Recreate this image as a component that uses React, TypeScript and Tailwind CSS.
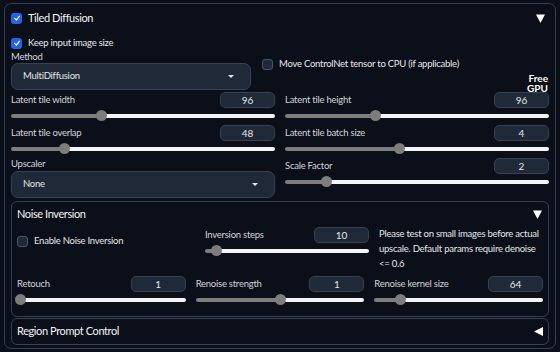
import React from "react";

const FONT = { fontFamily: "Lato, 'Noto Sans', sans-serif" };

function Check({ on }: { on?: boolean }) {
  return on ? (
    <span className="flex h-[11px] w-[11px] shrink-0 items-center justify-center rounded-[3px] bg-[#2563eb]">
      <svg viewBox="0 0 12 12" className="h-[8px] w-[8px]">
        <path d="M2.5 6.5 L5 9 L9.5 3.5" fill="none" stroke="white" strokeWidth="1.8" strokeLinecap="round" strokeLinejoin="round" />
      </svg>
    </span>
  ) : (
    <span className="h-[11px] w-[11px] shrink-0 rounded-[3px] border border-[#4b5563] bg-[#1f2937]" />
  );
}

function Caret({ dir }: { dir: "down" | "left" }) {
  return dir === "down" ? (
    <svg viewBox="0 0 9 9" className="h-[9px] w-[9px]">
      <path d="M0 0.5 H9 L4.5 9 Z" fill="white" />
    </svg>
  ) : (
    <svg viewBox="0 0 9 9" className="h-[9px] w-[9px]">
      <path d="M9 0 V9 L0 4.5 Z" fill="white" />
    </svg>
  );
}

function NumBox({ v }: { v: string }) {
  return (
    <div className="flex h-[16px] w-[55px] items-center justify-center rounded-[5px] border border-[#374151] bg-[#1f2937] text-[10px] text-[#e5e7eb]">
      {v}
    </div>
  );
}

function Slider({ pct }: { pct: number }) {
  return (
    <div className="relative flex h-[11px] items-center">
      <div className="flex h-[4px] w-full overflow-hidden rounded-full">
        <div className="h-full bg-[#7d7d7d]" style={{ width: `${pct}%` }} />
        <div className="h-full flex-1 bg-[#f3f4f6]" />
      </div>
      <div
        className="absolute top-0 h-[11px] w-[11px] rounded-full bg-[#7d7d7d]"
        style={{ left: `calc(${pct}% - 5px)` }}
      />
    </div>
  );
}

function SliderField({ label, v, pct }: { label: string; v: string; pct: number }) {
  return (
    <div className="flex flex-col">
      <div className="flex h-[16px] items-center justify-between">
        <span className="text-[9.5px] tracking-[-0.25px] text-[#d1d5db]">{label}</span>
        <NumBox v={v} />
      </div>
      <div className="mt-[2px]">
        <Slider pct={pct} />
      </div>
    </div>
  );
}

function Dropdown({ value, w }: { value: string; w: string }) {
  return (
    <div className={`flex h-[27px] ${w} items-center justify-between rounded-[7px] border border-[#374151] bg-[#1f2937] pl-[11px] pr-[16px] text-[9.5px] tracking-[-0.25px] text-[#e5e7eb]`}>
      <span>{value}</span>
      <span className="h-0 w-0 border-x-[3px] border-t-[3px] border-x-transparent border-t-[#e5e7eb]" />
    </div>
  );
}

export default function App() {
  return (
    <div className="h-[352px] w-[560px] bg-[#0b0f19] pl-[4px] pr-[4px] pt-[3px]" style={FONT}>
      <div className="h-[346px] rounded-[7px] border border-[#374151] px-[6px] pt-[4px]">
        {/* Header */}
        <div className="flex h-[20px] items-center justify-between pr-[4px]">
          <div className="flex items-center gap-[6px]">
            <Check on />
            <span className="text-[11px] tracking-[-0.4px] text-[#f3f4f6]">Tiled Diffusion</span>
          </div>
          <Caret dir="down" />
        </div>

        <div className="mt-[7px] flex h-[16px] items-center gap-[6px]">
          <Check on />
          <span className="text-[9.5px] tracking-[-0.25px] text-[#e5e7eb]">Keep input image size</span>
        </div>

        {/* Method row */}
        <div className="flex h-[39px]">
          <div className="flex w-[240px] flex-col">
            <span className="h-[12px] text-[9.5px] leading-[12px] tracking-[-0.25px] text-[#d1d5db]">Method</span>
            <Dropdown value="MultiDiffusion" w="w-[240px]" />
          </div>
          <div className="ml-[11px] flex flex-1 flex-col">
            <div className="mt-[6px] flex h-[14px] items-center gap-[6px]">
              <Check />
              <span className="text-[9.5px] tracking-[-0.25px] text-[#e5e7eb]">Move ControlNet tensor to CPU (if applicable)</span>
            </div>
            <div className="mt-[2px] flex flex-col items-end self-end pr-[1px] text-[10px] font-bold leading-[10px] text-white">
              <span>Free</span>
              <span>GPU</span>
            </div>
          </div>
        </div>

        {/* Slider grid */}
        <div className="mt-[2px] grid grid-cols-2 gap-x-[10px]">
          <SliderField label="Latent tile width" v="96" pct={34} />
          <SliderField label="Latent tile height" v="96" pct={34} />
        </div>
        <div className="mt-[4px] grid grid-cols-2 gap-x-[10px]">
          <SliderField label="Latent tile overlap" v="48" pct={20} />
          <SliderField label="Latent tile batch size" v="4" pct={43} />
        </div>
        <div className="mt-[4px] grid grid-cols-2 gap-x-[10px]">
          <div className="flex flex-col">
            <span className="mt-[-1px] h-[14px] text-[9.5px] leading-[14px] tracking-[-0.25px] text-[#d1d5db]">Upscaler</span>
            <Dropdown value="None" w="w-full" />
          </div>
          <SliderField label="Scale Factor" v="2" pct={15.5} />
        </div>

        {/* Noise Inversion */}
        <div className="mt-[3px] h-[116px] rounded-[6px] border border-[#374151] px-[5px] pt-[5px]">
          <div className="flex h-[14px] items-center justify-between pr-[1px]">
            <span className="text-[11px] tracking-[-0.4px] text-[#f3f4f6]">Noise Inversion</span>
            <Caret dir="down" />
          </div>
          <div className="mt-[6px] flex h-[45px]">
            <div className="flex w-[188px] items-start">
              <div className="mt-[7px] flex items-center gap-[6px]">
                <Check />
                <span className="text-[9.5px] tracking-[-0.25px] text-[#e5e7eb]">Enable Noise Inversion</span>
              </div>
            </div>
            <div className="w-[164px]">
              <SliderField label="Inversion steps" v="10" pct={7} />
            </div>
            <div className="ml-[10px] mt-[-1px] w-[164px] text-[9.5px] leading-[15px] tracking-[-0.25px] text-[#e5e7eb]">
              Please test on small images before actual upscale. Default params require denoise &lt;= 0.6
            </div>
          </div>
          <div className="mt-[4px] grid grid-cols-3 gap-x-[10px]">
            <SliderField label="Retouch" v="1" pct={2} />
            <SliderField label="Renoise strength" v="1" pct={50} />
            <SliderField label="Renoise kernel size" v="64" pct={15} />
          </div>
        </div>

        {/* Region Prompt Control */}
        <div className="mt-[1px] flex h-[27px] items-center justify-between rounded-[6px] border border-[#374151] pl-[5px] pr-[5px]">
          <span className="text-[11px] tracking-[-0.4px] text-[#f3f4f6]">Region Prompt Control</span>
          <Caret dir="left" />
        </div>
      </div>
    </div>
  );
}
